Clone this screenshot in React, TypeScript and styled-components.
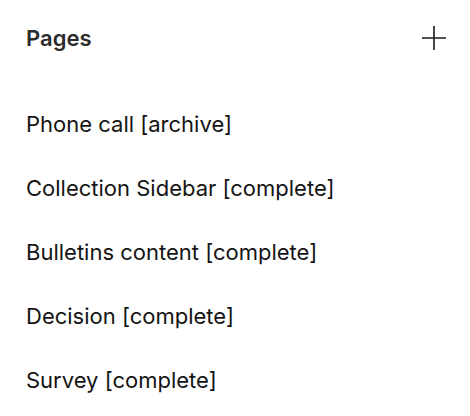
import styled, { createGlobalStyle } from 'styled-components'

const GlobalStyle = createGlobalStyle`
  body {
    margin: 0;
    background: #ffffff;
    font-family: Inter, 'Noto Sans', sans-serif;
  }
`

const Panel = styled.div`
  display: flex;
  flex-direction: column;
  padding: 0 24px 0 26px;
`

const Header = styled.div`
  display: flex;
  align-items: center;
  justify-content: space-between;
  height: 76px;
`

const Title = styled.h2`
  margin: 0;
  font-size: 22px;
  font-weight: 600;
  color: #2b2b2b;
`

const AddButton = styled.button`
  display: flex;
  align-items: center;
  justify-content: center;
  width: 24px;
  height: 24px;
  padding: 0;
  border: none;
  background: none;
  color: #1a1a1a;
  cursor: pointer;
`

const List = styled.ul`
  list-style: none;
  margin: 0;
  padding: 16px 0 0;
`

const Item = styled.li`
  display: flex;
  align-items: center;
  height: 64px;
  font-size: 22px;
  color: #141414;
`

const pages = [
  'Phone call [archive]',
  'Collection Sidebar [complete]',
  'Bulletins content [complete]',
  'Decision [complete]',
  'Survey [complete]',
]

function PlusIcon() {
  return (
    <svg width="24" height="24" viewBox="0 0 24 24" fill="none" stroke="currentColor" strokeWidth="1.6">
      <path d="M0 12h24M12 0v24" />
    </svg>
  )
}

export default function App() {
  return (
    <>
      <GlobalStyle />
      <Panel>
        <Header>
          <Title>Pages</Title>
          <AddButton aria-label="Add page">
            <PlusIcon />
          </AddButton>
        </Header>
        <List>
          {pages.map((p) => (
            <Item key={p}>{p}</Item>
          ))}
        </List>
      </Panel>
    </>
  )
}
